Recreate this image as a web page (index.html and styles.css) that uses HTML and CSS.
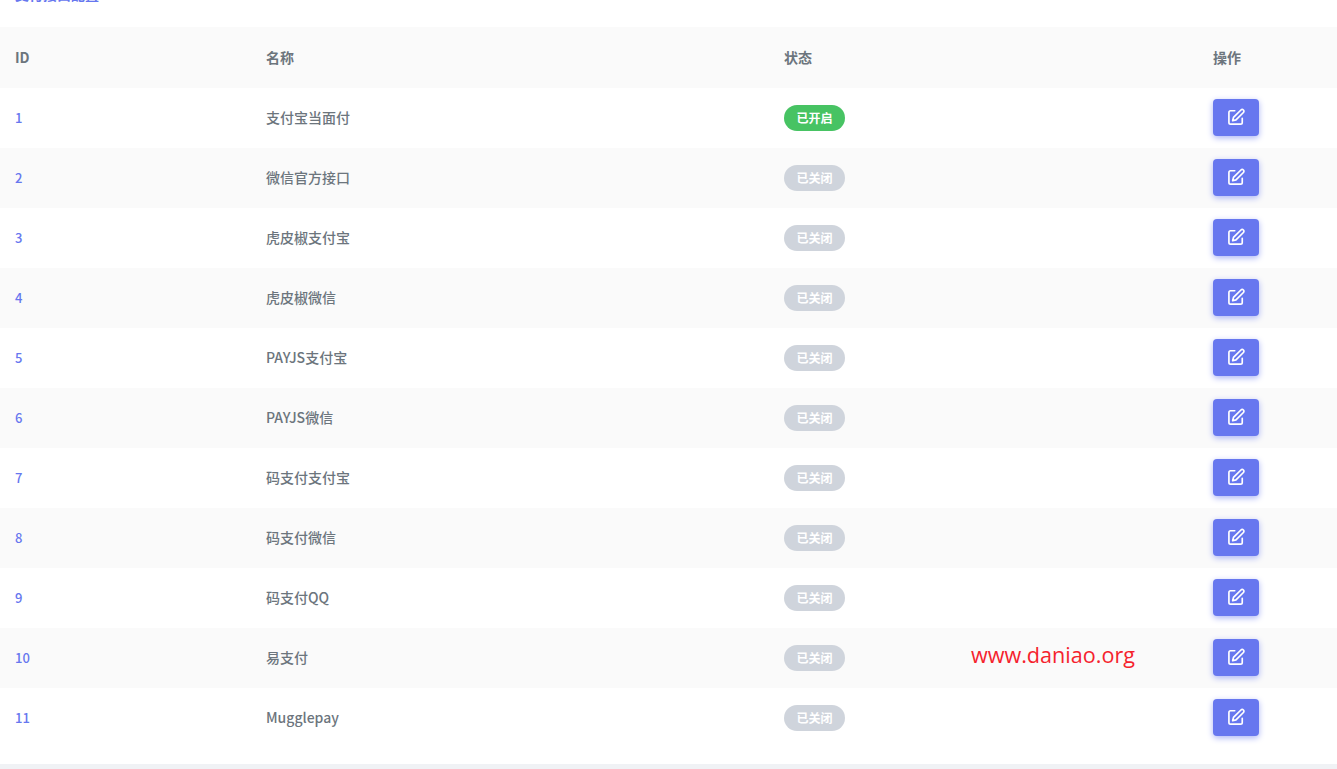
FILE: index.html
```html
<!DOCTYPE html>
<html lang="zh">
<head>
<meta charset="utf-8">
<title>支付配置</title>
<link rel="stylesheet" href="styles.css">
</head>
<body>
<main class="card">
<h2 class="title">支付接口配置</h2>
<table class="table">
<colgroup><col class="c1"><col class="c2"><col class="c3"><col class="c4"></colgroup>
<thead><tr><th>ID</th><th>名称</th><th>状态</th><th>操作</th></tr></thead>
<tbody>
<tr><td class="id">1</td><td class="name">支付宝当面付</td><td><span class="pill on">已开启</span></td><td><button class="edit"><svg viewBox="0.5 -0.5 24 24"><path d="M11 4H6a2 2 0 0 0-2 2v12a2 2 0 0 0 2 2h12a2 2 0 0 0 2-2v-5"/><path d="M18.4 3.1a2.1 2.1 0 0 1 3 3L12.5 15 8.5 16l1-4z"/></svg></button></td></tr>
<tr><td class="id">2</td><td class="name">微信官方接口</td><td><span class="pill">已关闭</span></td><td><button class="edit"><svg viewBox="0.5 -0.5 24 24"><path d="M11 4H6a2 2 0 0 0-2 2v12a2 2 0 0 0 2 2h12a2 2 0 0 0 2-2v-5"/><path d="M18.4 3.1a2.1 2.1 0 0 1 3 3L12.5 15 8.5 16l1-4z"/></svg></button></td></tr>
<tr><td class="id">3</td><td class="name">虎皮椒支付宝</td><td><span class="pill">已关闭</span></td><td><button class="edit"><svg viewBox="0.5 -0.5 24 24"><path d="M11 4H6a2 2 0 0 0-2 2v12a2 2 0 0 0 2 2h12a2 2 0 0 0 2-2v-5"/><path d="M18.4 3.1a2.1 2.1 0 0 1 3 3L12.5 15 8.5 16l1-4z"/></svg></button></td></tr>
<tr><td class="id">4</td><td class="name">虎皮椒微信</td><td><span class="pill">已关闭</span></td><td><button class="edit"><svg viewBox="0.5 -0.5 24 24"><path d="M11 4H6a2 2 0 0 0-2 2v12a2 2 0 0 0 2 2h12a2 2 0 0 0 2-2v-5"/><path d="M18.4 3.1a2.1 2.1 0 0 1 3 3L12.5 15 8.5 16l1-4z"/></svg></button></td></tr>
<tr><td class="id">5</td><td class="name">PAYJS支付宝</td><td><span class="pill">已关闭</span></td><td><button class="edit"><svg viewBox="0.5 -0.5 24 24"><path d="M11 4H6a2 2 0 0 0-2 2v12a2 2 0 0 0 2 2h12a2 2 0 0 0 2-2v-5"/><path d="M18.4 3.1a2.1 2.1 0 0 1 3 3L12.5 15 8.5 16l1-4z"/></svg></button></td></tr>
<tr><td class="id">6</td><td class="name">PAYJS微信</td><td><span class="pill">已关闭</span></td><td><button class="edit"><svg viewBox="0.5 -0.5 24 24"><path d="M11 4H6a2 2 0 0 0-2 2v12a2 2 0 0 0 2 2h12a2 2 0 0 0 2-2v-5"/><path d="M18.4 3.1a2.1 2.1 0 0 1 3 3L12.5 15 8.5 16l1-4z"/></svg></button></td></tr>
<tr><td class="id">7</td><td class="name">码支付支付宝</td><td><span class="pill">已关闭</span></td><td><button class="edit"><svg viewBox="0.5 -0.5 24 24"><path d="M11 4H6a2 2 0 0 0-2 2v12a2 2 0 0 0 2 2h12a2 2 0 0 0 2-2v-5"/><path d="M18.4 3.1a2.1 2.1 0 0 1 3 3L12.5 15 8.5 16l1-4z"/></svg></button></td></tr>
<tr><td class="id">8</td><td class="name">码支付微信</td><td><span class="pill">已关闭</span></td><td><button class="edit"><svg viewBox="0.5 -0.5 24 24"><path d="M11 4H6a2 2 0 0 0-2 2v12a2 2 0 0 0 2 2h12a2 2 0 0 0 2-2v-5"/><path d="M18.4 3.1a2.1 2.1 0 0 1 3 3L12.5 15 8.5 16l1-4z"/></svg></button></td></tr>
<tr><td class="id">9</td><td class="name">码支付QQ</td><td><span class="pill">已关闭</span></td><td><button class="edit"><svg viewBox="0.5 -0.5 24 24"><path d="M11 4H6a2 2 0 0 0-2 2v12a2 2 0 0 0 2 2h12a2 2 0 0 0 2-2v-5"/><path d="M18.4 3.1a2.1 2.1 0 0 1 3 3L12.5 15 8.5 16l1-4z"/></svg></button></td></tr>
<tr><td class="id">10</td><td class="name">易支付</td><td><span class="pill">已关闭</span></td><td><button class="edit"><svg viewBox="0.5 -0.5 24 24"><path d="M11 4H6a2 2 0 0 0-2 2v12a2 2 0 0 0 2 2h12a2 2 0 0 0 2-2v-5"/><path d="M18.4 3.1a2.1 2.1 0 0 1 3 3L12.5 15 8.5 16l1-4z"/></svg></button></td></tr>
<tr><td class="id">11</td><td class="name">Mugglepay</td><td><span class="pill">已关闭</span></td><td><button class="edit"><svg viewBox="0.5 -0.5 24 24"><path d="M11 4H6a2 2 0 0 0-2 2v12a2 2 0 0 0 2 2h12a2 2 0 0 0 2-2v-5"/><path d="M18.4 3.1a2.1 2.1 0 0 1 3 3L12.5 15 8.5 16l1-4z"/></svg></button></td></tr>
</tbody>
</table>
<div class="watermark">www.daniao.org</div>
</main>
</body>
</html>
```
FILE: styles.css
```css
html, body {
  margin: 0;
  height: 769px;
  overflow: hidden;
  background: #f0f2f5;
  font-family: "Noto Sans CJK SC", "Noto Sans", sans-serif;
}
.card {
  position: relative;
  height: 764px;
  background: #fff;
  overflow: hidden;
}
.title {
  box-sizing: border-box;
  margin: -18px 0 0;
  height: 45px;
  padding: 0 15px;
  font-size: 14px;
  line-height: 24px;
  font-weight: 700;
  color: #6777ef;
}
.table {
  width: 1337px;
  table-layout: fixed;
  border-collapse: collapse;
  font-size: 14px;
  line-height: 20px;
  color: #6c757d;
}
.c1 { width: 251px; }
.c2 { width: 518px; }
.c3 { width: 429px; }
.c4 { width: 139px; }
th, td {
  padding: 0 0 2px 15px;
  text-align: left;
  font-weight: 500;
}
th {
  height: 59px;
  background: #fafafa;
  font-weight: 700;
}
td { height: 58px; }
tbody tr:nth-child(even) { background: #fafafa; }
td.id {
  padding-bottom: 1px;
  color: #6777ef;
  font-size: 13px;
  font-weight: 500;
}
.pill {
  display: block;
  width: 61px;
  height: 26px;
  margin-top: 2px;
  border-radius: 13px;
  background: #cfd4dc;
  color: #fff;
  font-size: 12px;
  line-height: 26px;
  text-align: center;
  font-weight: 700;
}
.pill.on { background: #47c363; }
.edit {
  display: flex;
  align-items: center;
  justify-content: center;
  width: 46px;
  height: 37px;
  padding: 0;
  border: 0;
  border-radius: 4px;
  background: #6777ef;
  box-shadow: 0 2px 6px #acb5f6;
}
.edit svg {
  width: 20px;
  height: 20px;
  fill: none;
  stroke: #fff;
  stroke-width: 2;
  stroke-linecap: round;
  stroke-linejoin: round;
}
.watermark {
  position: absolute;
  left: 971px;
  top: 640px;
  font-family: "Open Sans", sans-serif;
  font-size: 21.6px;
  line-height: 30px;
  color: #f5222d;
}
```
